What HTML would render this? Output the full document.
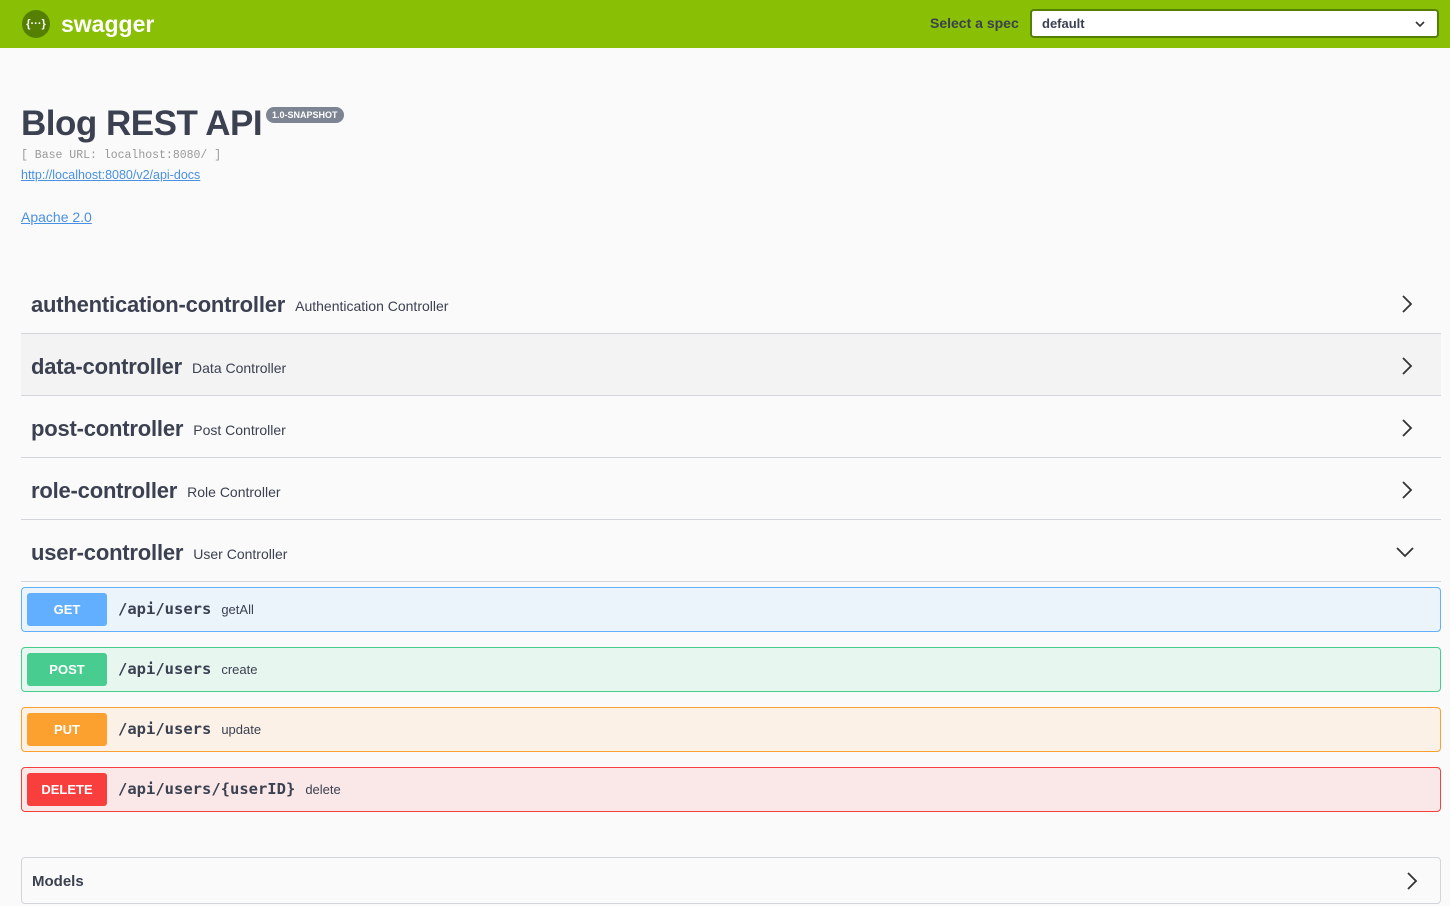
<!DOCTYPE html>
<html><head><meta charset="utf-8"><style>
*{box-sizing:border-box;margin:0;padding:0}
body{width:1450px;height:906px;overflow:hidden;background:#fafafa;font-family:"Liberation Sans","DejaVu Sans",sans-serif;color:#3b4151}
.top{height:48px;background:#89bf04;position:relative}
.logo{position:absolute;left:22px;top:10px;width:28px;height:28px;border-radius:50%;background:#547f00;color:#fff;font-size:11px;font-weight:bold;text-align:center;line-height:28px}
.brand{position:absolute;left:61px;top:11px;color:#fff;font-weight:bold;font-size:23px}
.sel-l{position:absolute;left:930px;top:15px;color:#3b4151;font-weight:bold;font-size:14px}
.sel{position:absolute;left:1030px;top:9px;width:409px;height:29px;border:2px solid #547f00;border-radius:4px;background:#fff;font-weight:bold;font-size:13px;padding:5px 10px;color:#3b4151}
.sel svg{position:absolute;right:12px;top:9px}
h1{position:absolute;left:21px;top:104px;font-size:35px;font-weight:bold;letter-spacing:-0.5px}
.badge{position:absolute;left:266px;top:107px;background:#7d8492;color:#fff;font-size:9px;font-weight:bold;border-radius:9px;padding:3px 6px}
.base{position:absolute;left:21px;top:149px;font-family:"Liberation Mono",monospace;font-size:11.5px;color:#999}
a{color:#4990e2;text-decoration:underline}
.l1{position:absolute;left:21px;top:168px;font-size:12.5px}
.l2{position:absolute;left:21px;top:209px;font-size:14px}
.row{position:absolute;left:21px;width:1420px;height:62px;border-bottom:1px solid #d2d5da;display:flex;align-items:center;padding-left:10px;padding-top:4px}
.row b{font-size:22px;letter-spacing:-0.2px}
.row span{font-size:14px;margin-left:10px;padding-top:2px}
.row svg{position:absolute;right:28px;top:22px}
.op{position:absolute;left:21px;width:1420px;height:45px;border:1px solid;border-radius:4px}
.op .m{position:absolute;left:5px;top:5px;width:80px;height:33px;border-radius:3px;color:#fff;font-weight:bold;font-size:13px;text-align:center;line-height:33px}
.op .p{position:absolute;left:96px;top:12px;font-family:"DejaVu Sans Mono","Liberation Mono",monospace;font-weight:bold;font-size:15.5px}
.op .d{font-family:"Liberation Sans",sans-serif;font-weight:normal;font-size:13px;margin-left:10px}
.models{position:absolute;left:21px;top:857px;width:1420px;height:47px;border:1px solid #d2d5da;border-radius:4px}
.models b{position:absolute;left:10px;top:15px;font-size:15px}
.models svg{position:absolute;right:22px;top:13px}
</style></head><body>
<div class="top"><div class="logo">{···}</div><div class="brand">swagger</div>
<div class="sel-l">Select a spec</div>
<div class="sel">default<svg width="10" height="8" viewBox="0 0 10 8"><path d="M1 2l4 4 4-4" stroke="#333" stroke-width="1.6" fill="none"/></svg></div></div>
<h1>Blog REST API</h1><div class="badge">1.0-SNAPSHOT</div>
<div class="base">[ Base URL: localhost:8080/ ]</div>
<a class="l1">http://localhost:8080/v2/api-docs</a>
<a class="l2">Apache 2.0</a>

<div class="row" style="top:272px"><b>authentication-controller</b><span>Authentication Controller</span><svg width="12" height="20" viewBox="0 0 12 20"><path d="M2 2l8 8-8 8" stroke="#333" stroke-width="1.8" fill="none"/></svg></div>
<div class="row" style="top:334px;background:#f3f3f3"><b>data-controller</b><span>Data Controller</span><svg width="12" height="20" viewBox="0 0 12 20"><path d="M2 2l8 8-8 8" stroke="#333" stroke-width="1.8" fill="none"/></svg></div>
<div class="row" style="top:396px"><b>post-controller</b><span>Post Controller</span><svg width="12" height="20" viewBox="0 0 12 20"><path d="M2 2l8 8-8 8" stroke="#333" stroke-width="1.8" fill="none"/></svg></div>
<div class="row" style="top:458px"><b>role-controller</b><span>Role Controller</span><svg width="12" height="20" viewBox="0 0 12 20"><path d="M2 2l8 8-8 8" stroke="#333" stroke-width="1.8" fill="none"/></svg></div>
<div class="row" style="top:520px"><b>user-controller</b><span>User Controller</span><svg width="20" height="20" viewBox="0 0 20 20" style="right:26px"><path d="M2 6l8 8 8-8" stroke="#333" stroke-width="1.8" fill="none"/></svg></div>

<div class="op" style="top:587px;background:#ebf3fb;border-color:#61affe"><div class="m" style="background:#61affe">GET</div><div class="p">/api/users<span class="d">getAll</span></div></div>
<div class="op" style="top:647px;background:#e8f6f0;border-color:#49cc90"><div class="m" style="background:#49cc90">POST</div><div class="p">/api/users<span class="d">create</span></div></div>
<div class="op" style="top:707px;background:#fbf1e6;border-color:#fca130"><div class="m" style="background:#fca130">PUT</div><div class="p">/api/users<span class="d">update</span></div></div>
<div class="op" style="top:767px;background:#fae7e7;border-color:#f93e3e"><div class="m" style="background:#f93e3e">DELETE</div><div class="p">/api/users/{userID}<span class="d">delete</span></div></div>

<div class="models"><b>Models</b><svg width="12" height="20" viewBox="0 0 12 20"><path d="M2 2l8 8-8 8" stroke="#333" stroke-width="1.8" fill="none"/></svg></div>
</body></html>
